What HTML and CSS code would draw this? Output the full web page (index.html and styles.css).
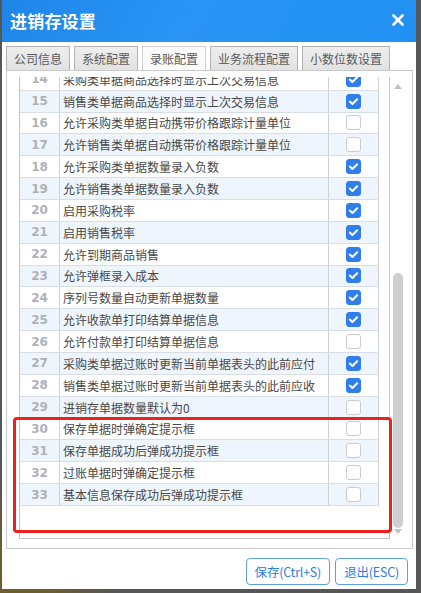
FILE: index.html
```html
<!DOCTYPE html>
<html lang="zh-CN">
<head>
<meta charset="utf-8">
<title>进销存设置</title>
<link rel="stylesheet" href="styles.css">
</head>
<body>
<div class="dialog">
  <div class="titlebar">
    <span class="title">进销存设置</span>
    <svg class="close" width="12" height="12" viewBox="0 0 12 12"><path d="M1.5 1.5 L10.5 10.5 M10.5 1.5 L1.5 10.5" stroke="#fff" stroke-width="2.6" stroke-linecap="round"/></svg>
  </div>
  <div class="tabs">
    <div class="tab">公司信息</div>
    <div class="tab">系统配置</div>
    <div class="tab active">录账配置</div>
    <div class="tab">业务流程配置</div>
    <div class="tab">小数位数设置</div>
  </div>
  <div class="panel">
    <div class="grid">
      <div class="viewport">
        <div class="rows">
          <div class="row"><span class="num">14</span><span class="txt">采购类单据商品选择时显示上次交易信息</span><span class="chk"><svg class="cb on" viewBox="0 0 15 15"><rect width="15" height="15" rx="2.5"/><path d="M3.8 7.6 L6.4 10 L11.2 5.2"/></svg></span></div>
          <div class="row odd"><span class="num">15</span><span class="txt">销售类单据商品选择时显示上次交易信息</span><span class="chk"><svg class="cb on" viewBox="0 0 15 15"><rect width="15" height="15" rx="2.5"/><path d="M3.8 7.6 L6.4 10 L11.2 5.2"/></svg></span></div>
          <div class="row"><span class="num">16</span><span class="txt">允许采购类单据自动携带价格跟踪计量单位</span><span class="chk"><span class="cb off"></span></span></div>
          <div class="row odd"><span class="num">17</span><span class="txt">允许销售类单据自动携带价格跟踪计量单位</span><span class="chk"><span class="cb off"></span></span></div>
          <div class="row"><span class="num">18</span><span class="txt">允许采购类单据数量录入负数</span><span class="chk"><svg class="cb on" viewBox="0 0 15 15"><rect width="15" height="15" rx="2.5"/><path d="M3.8 7.6 L6.4 10 L11.2 5.2"/></svg></span></div>
          <div class="row odd"><span class="num">19</span><span class="txt">允许销售类单据数量录入负数</span><span class="chk"><svg class="cb on" viewBox="0 0 15 15"><rect width="15" height="15" rx="2.5"/><path d="M3.8 7.6 L6.4 10 L11.2 5.2"/></svg></span></div>
          <div class="row"><span class="num">20</span><span class="txt">启用采购税率</span><span class="chk"><svg class="cb on" viewBox="0 0 15 15"><rect width="15" height="15" rx="2.5"/><path d="M3.8 7.6 L6.4 10 L11.2 5.2"/></svg></span></div>
          <div class="row odd"><span class="num">21</span><span class="txt">启用销售税率</span><span class="chk"><svg class="cb on" viewBox="0 0 15 15"><rect width="15" height="15" rx="2.5"/><path d="M3.8 7.6 L6.4 10 L11.2 5.2"/></svg></span></div>
          <div class="row"><span class="num">22</span><span class="txt">允许到期商品销售</span><span class="chk"><svg class="cb on" viewBox="0 0 15 15"><rect width="15" height="15" rx="2.5"/><path d="M3.8 7.6 L6.4 10 L11.2 5.2"/></svg></span></div>
          <div class="row odd"><span class="num">23</span><span class="txt">允许弹框录入成本</span><span class="chk"><svg class="cb on" viewBox="0 0 15 15"><rect width="15" height="15" rx="2.5"/><path d="M3.8 7.6 L6.4 10 L11.2 5.2"/></svg></span></div>
          <div class="row"><span class="num">24</span><span class="txt">序列号数量自动更新单据数量</span><span class="chk"><svg class="cb on" viewBox="0 0 15 15"><rect width="15" height="15" rx="2.5"/><path d="M3.8 7.6 L6.4 10 L11.2 5.2"/></svg></span></div>
          <div class="row odd"><span class="num">25</span><span class="txt">允许收款单打印结算单据信息</span><span class="chk"><svg class="cb on" viewBox="0 0 15 15"><rect width="15" height="15" rx="2.5"/><path d="M3.8 7.6 L6.4 10 L11.2 5.2"/></svg></span></div>
          <div class="row"><span class="num">26</span><span class="txt">允许付款单打印结算单据信息</span><span class="chk"><span class="cb off"></span></span></div>
          <div class="row odd"><span class="num">27</span><span class="txt">采购类单据过账时更新当前单据表头的此前应付</span><span class="chk"><svg class="cb on" viewBox="0 0 15 15"><rect width="15" height="15" rx="2.5"/><path d="M3.8 7.6 L6.4 10 L11.2 5.2"/></svg></span></div>
          <div class="row"><span class="num">28</span><span class="txt">销售类单据过账时更新当前单据表头的此前应收</span><span class="chk"><svg class="cb on" viewBox="0 0 15 15"><rect width="15" height="15" rx="2.5"/><path d="M3.8 7.6 L6.4 10 L11.2 5.2"/></svg></span></div>
          <div class="row odd"><span class="num">29</span><span class="txt">进销存单据数量默认为0</span><span class="chk"><span class="cb off"></span></span></div>
          <div class="row"><span class="num">30</span><span class="txt">保存单据时弹确定提示框</span><span class="chk"><span class="cb off"></span></span></div>
          <div class="row odd"><span class="num">31</span><span class="txt">保存单据成功后弹成功提示框</span><span class="chk"><span class="cb off"></span></span></div>
          <div class="row"><span class="num">32</span><span class="txt">过账单据时弹确定提示框</span><span class="chk"><span class="cb off"></span></span></div>
          <div class="row odd"><span class="num">33</span><span class="txt">基本信息保存成功后弹成功提示框</span><span class="chk"><span class="cb off"></span></span></div>
        </div>
      </div>
      <div class="scrollbar">
        <span class="arrow up"></span>
        <span class="thumb"></span>
        <span class="arrow down"></span>
      </div>
    </div>
  </div>
  <div class="footer">
    <button class="btn">保存(Ctrl+S)</button>
    <button class="btn">退出(ESC)</button>
  </div>
  <div class="annot"></div>
</div>
</body>
</html>
```

FILE: styles.css
```css
* { box-sizing: border-box; }
html, body { margin: 0; padding: 0; }
body {
  width: 421px;
  height: 593px;
  overflow: hidden;
  background: radial-gradient(circle at 0% 100%, #6e5d2f 0, #6e5d2f 40px, #565656 120px) #565656;
  font-family: "Noto Sans CJK SC", "Noto Sans", sans-serif;
}
.dialog {
  position: relative;
  margin-left: 2px;
  width: 414px;
  height: 589px;
  background: #fff;
  display: flex;
  flex-direction: column;
}
.titlebar {
  height: 42px;
  flex: none;
  display: flex;
  align-items: center;
  justify-content: space-between;
  padding: 0 12px 2px 8px;
  background: linear-gradient(120deg, #1f86e8 0%, #2590f2 30%, #2a95f6 45%, #2593f4 70%, #2391f3 100%);
}
.title {
  color: #fff;
  font-size: 17px;
  font-weight: 700;
  letter-spacing: 0.2px;
}
.close { display: block; }
.tabs {
  display: flex;
  gap: 4px;
  margin-top: 4px;
  padding-left: 4px;
  height: 24px;
  flex: none;
}
.tab {
  height: 24px;
  padding: 0 7px;
  border: 1px solid #b2b2b2;
  border-bottom: none;
  background: linear-gradient(#eeeeee, #e2e2e2);
  color: #5a5a5a;
  font-size: 12px;
  line-height: 23px;
  white-space: nowrap;
}
.tab.active {
  background: #fbfbfb;
  border-color: #cfcfcf;
}
.panel {
  margin-left: 4px;
  width: 407px;
  height: 479px;
  flex: none;
  border: 1px solid #c9c9c9;
  padding: 6px 6px 9px 12px;
}
.grid {
  display: flex;
  height: 462px;
}
.viewport {
  width: 371px;
  height: 462px;
  overflow: hidden;
  border: 1px solid #c4c4c4;
  border-top: none;
}
.rows { margin-top: -8.2px; }
.row {
  display: flex;
  width: 359px;
  height: 21.86px;
  border-bottom: 1px solid #d9dee4;
  background: #fff;
}
.row.odd { background: #eef5fc; }
.num, .txt, .chk {
  display: flex;
  align-items: center;
  border-right: 1px solid #cdd2d8;
}
.num {
  width: 40px;
  justify-content: center;
  font-family: "DejaVu Sans", sans-serif;
  font-weight: 700;
  font-size: 12px;
  color: #aeb2b7;
}
.txt {
  width: 269px;
  padding-left: 3px;
  font-size: 12px;
  color: #484848;
  white-space: nowrap;
  overflow: hidden;
}
.chk {
  width: 50px;
  justify-content: center;
}
.cb {
  display: block;
  width: 15px;
  height: 15px;
  border-radius: 3px;
}
.cb.on rect { fill: #2f7eeb; }
.cb.on path {
  fill: none;
  stroke: #fff;
  stroke-width: 2;
  stroke-linecap: round;
  stroke-linejoin: round;
}
.cb.off {
  background: #fff;
  border: 1px solid #cbcbcb;
}
.scrollbar {
  width: 16px;
  height: 464px;
  display: flex;
  flex-direction: column;
  align-items: center;
}
.arrow {
  display: block;
  width: 0;
  height: 0;
  border-left: 4px solid transparent;
  border-right: 4px solid transparent;
}
.arrow.up {
  margin-top: 7px;
  border-bottom: 5px solid #c2c2c2;
}
.thumb {
  display: block;
  width: 10px;
  height: 255px;
  margin-top: 184px;
  border-radius: 5px;
  background: #cfcfcf;
}
.arrow.down {
  margin-top: 1px;
  border-top: 5px solid #c2c2c2;
}
.footer {
  flex: 1;
  display: flex;
  justify-content: flex-end;
  align-items: flex-start;
  gap: 5px;
  padding: 9px 8px 0 0;
}
.btn {
  height: 27px;
  padding: 0 8px;
  border: 1px solid #5d9de9;
  border-radius: 4px;
  background: #fff;
  color: #2b7de0;
  font-family: "Noto Sans CJK SC", "Noto Sans", sans-serif;
  font-size: 12.5px;
  letter-spacing: -0.2px;
  line-height: 25px;
}
.annot {
  position: absolute;
  left: 11px;
  top: 417px;
  width: 379px;
  height: 116px;
  border: 3px solid #e7231c;
  border-radius: 4px;
  pointer-events: none;
}
```
